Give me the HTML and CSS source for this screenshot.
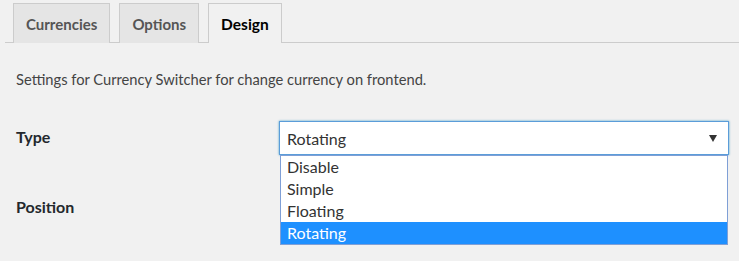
FILE: index.html
```html
<!DOCTYPE html>
<html lang="en">
<head>
    <meta charset="UTF-8">
    <meta name="viewport" content="width=device-width, initial-scale=1.0">
    <title>Currency Switcher - Design</title>
    <link rel="stylesheet" href="styles.css">
</head>
<body>
    <!-- Onglets -->
    <div class="nav-tabs">
        <a class="tab">Currencies</a>
        <a class="tab">Options</a>
        <a class="tab active">Design</a>
    </div>

    <p class="intro">Settings for Currency Switcher for change currency on frontend.</p>

    <div class="form-table">
        <div class="form-row">
            <div class="label">Type</div>
            <div class="field">
                <div class="select">
                    <span>Rotating</span>
                    <span class="arrow"></span>
                </div>
                <div class="options">
                    <div class="opt">Disable</div>
                    <div class="opt">Simple</div>
                    <div class="opt">Floating</div>
                    <div class="opt hl">Rotating</div>
                </div>
            </div>
        </div>
        <div class="form-row">
            <div class="label">Position</div>
            <div class="field"></div>
        </div>
    </div>
</body>
</html>
```

FILE: styles.css
```css
* {
    margin: 0;
    padding: 0;
    box-sizing: border-box;
    font-family: "Lato", "Open Sans", sans-serif;
}

html, body {
    min-height: 100vh;
}

body {
    background-color: #f1f1f1;
    color: #444;
}

.nav-tabs {
    display: flex;
    gap: 9px;
    margin-left: 5px;
    padding: 3px 0 0 8px;
    border-bottom: 1px solid #ccc;
    height: 43px;
}

.tab {
    display: flex;
    align-items: center;
    height: 40px;
    padding: 0 12px;
    background: #e5e5e5;
    border: 1px solid #ccc;
    border-bottom: none;
    font-size: 15px;
    font-weight: 700;
    color: #555;
}

.tab.active {
    background: #f1f1f1;
    color: #000;
    font-size: 15.5px;
    margin-bottom: -1px;
}

.intro {
    font-size: 14.7px;
    line-height: 20px;
    padding: 26px 16px 0;
    color: #444;
}

.form-table {
    display: flex;
    flex-direction: column;
    gap: 36px;
    padding: 32px 16px 0;
}

.form-row {
    display: grid;
    grid-template-columns: 263px 450px;
    align-items: center;
    height: 34px;
}

.label {
    padding-bottom: 4px;
    font-size: 16px;
    font-weight: 700;
    color: #23282d;
}

.field {
    position: relative;
}

.select {
    display: flex;
    align-items: center;
    justify-content: space-between;
    height: 34px;
    padding: 0 11px 0 7px;
    background: #fff;
    border: 1px solid #5b9dd9;
    box-shadow: 0 0 2px rgba(30, 140, 190, 0.8);
    font-size: 16px;
    color: #333;
}

.arrow {
    width: 0;
    height: 0;
    border-left: 4px solid transparent;
    border-right: 4px solid transparent;
    border-top: 7px solid #333;
}

.options {
    position: absolute;
    top: 34px;
    left: 1px;
    right: 1px;
    z-index: 10;
    background: #fff;
    border: 1px solid #7f9fd6;
}

.opt {
    height: 22px;
    line-height: 22px;
    padding-left: 6px;
    font-size: 16px;
    color: #333;
}

.opt.hl {
    background: #1e90ff;
    color: #fff;
}
```
